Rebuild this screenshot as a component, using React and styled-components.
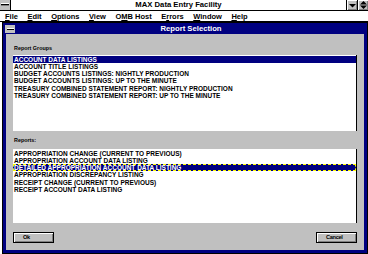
import React from "react";
import styled, { createGlobalStyle } from "styled-components";

const GlobalStyle = createGlobalStyle`
  html, body {
    margin: 0;
    padding: 0;
    background: #fff;
  }
  body {
    width: 368px;
    height: 254px;
    overflow: hidden;
    font-family: "Liberation Sans", Arial, sans-serif;
  }
`;

const menus = [
  ["F", "ile"],
  ["E", "dit"],
  ["O", "ptions"],
  ["V", "iew"],
  ["O", "MB Host", 1],
  ["E", "rrors", 1],
  ["W", "indow"],
  ["H", "elp"],
];

const groups = [
  "ACCOUNT DATA LISTINGS",
  "ACCOUNT TITLE LISTINGS",
  "BUDGET ACCOUNTS LISTINGS: NIGHTLY PRODUCTION",
  "BUDGET ACCOUNTS LISTINGS: UP TO THE MINUTE",
  "TREASURY COMBINED STATEMENT REPORT: NIGHTLY PRODUCTION",
  "TREASURY COMBINED STATEMENT REPORT: UP TO THE MINUTE",
];

const reports = [
  "APPROPRIATION CHANGE (CURRENT TO PREVIOUS)",
  "APPROPRIATION ACCOUNT DATA LISTING",
  "DETAILED APPROPRIATION ACCOUNT DATA LISTING",
  "APPROPRIATION DISCREPANCY LISTING",
  "RECEIPT CHANGE (CURRENT TO PREVIOUS)",
  "RECEIPT ACCOUNT DATA LISTING",
];

function MenuLabel({ item }) {
  const [first, rest, second] = item;
  if (second) {
    // underline sits on the second letter
    return (
      <MenuItem>
        {first}
        <u>{rest[0]}</u>
        {rest.slice(1)}
      </MenuItem>
    );
  }
  return (
    <MenuItem>
      <u>{first}</u>
      {rest}
    </MenuItem>
  );
}

export default function App() {
  return (
    <Screen>
      <GlobalStyle />
      <AppTitle>
        <AppSysBox />
        <AppTitleText>MAX Data Entry Facility</AppTitleText>
        <SizeButton>
          <svg width="7" height="5" viewBox="0 0 7 5">
            <path d="M0 1h7L3.5 4.5z" fill="#000" />
          </svg>
        </SizeButton>
        <SizeButton>
          <svg width="7" height="8" viewBox="0 0 7 8">
            <path d="M3.5 0L7 3.5H0z M0 4.5h7L3.5 8z" fill="#000" />
          </svg>
        </SizeButton>
      </AppTitle>

      <MenuBar>
        {menus.map((m, i) => (
          <MenuLabel key={i} item={m} />
        ))}
      </MenuBar>

      <Workspace>
        <Dialog>
          <Caption>
            <DialogSysBox />
            <CaptionText>Report Selection</CaptionText>
          </Caption>
          <Body>
            <Label $h={13}>Report Groups</Label>
            <ListBox $h={76}>
              {groups.map((g, i) => (
                <Row key={g} $selected={i === 0}>
                  {g}
                </Row>
              ))}
            </ListBox>
            <Label $h={18}>Reports:</Label>
            <ListBox $h={74}>
              {reports.map((r, i) => (
                <Row key={r} $selected={i === 2} $focused={i === 2}>
                  {r}
                </Row>
              ))}
            </ListBox>
            <ButtonRow>
              <PushButton>Ok</PushButton>
              <PushButton>Cancel</PushButton>
            </ButtonRow>
          </Body>
        </Dialog>
      </Workspace>
    </Screen>
  );
}

const Screen = styled.div`
  width: 368px;
  height: 254px;
  display: flex;
  flex-direction: column;
  background: #fff;
  overflow: hidden;
`;

const AppTitle = styled.div`
  height: 10px;
  display: flex;
  border-bottom: 1px solid #000;
  background: #fff;
`;

const AppSysBox = styled.div`
  width: 10px;
  height: 10px;
  background: #c0c0c0;
  border-right: 1px solid #000;
  position: relative;
  &::after {
    content: "";
    position: absolute;
    left: 1px;
    top: 4px;
    width: 8px;
    height: 1px;
    background: #000;
    box-shadow: 0 -1px 0 #fff, 0 1px 0 #808080;
  }
`;

const AppTitleText = styled.div`
  flex: 1;
  text-align: center;
  font-size: 7.7px;
  font-weight: 700;
  line-height: 10px;
  color: #000;
`;

const SizeButton = styled.div`
  width: 10px;
  height: 10px;
  border-left: 1px solid #000;
  background: #c0c0c0;
  box-shadow: inset 1px 1px #fff, inset -1px -1px #808080;
  display: flex;
  align-items: center;
  justify-content: center;
`;

const MenuBar = styled.div`
  height: 10px;
  display: flex;
  gap: 9.5px;
  padding-left: 5px;
  border-bottom: 1px solid #000;
  background: #fff;
`;

const MenuItem = styled.span`
  font-size: 7.5px;
  font-weight: 700;
  line-height: 11px;
  color: #000;
  white-space: nowrap;
  u {
    text-decoration: underline;
    text-underline-offset: 1px;
  }
`;

const Workspace = styled.div`
  flex: 1;
  display: flex;
  padding-left: 2px;
  background: #fff;
`;

const Dialog = styled.div`
  width: 366px;
  height: 232px;
  box-sizing: border-box;
  border: 1px solid #000;
  background: #000080;
  display: flex;
  flex-direction: column;
`;

const Caption = styled.div`
  height: 11px;
  display: flex;
  align-items: center;
  padding-left: 2px;
`;

const DialogSysBox = styled.div`
  width: 10px;
  height: 8px;
  background: #c0c0c0;
  position: relative;
  &::after {
    content: "";
    position: absolute;
    left: 2px;
    top: 3px;
    width: 7px;
    height: 1px;
    background: #fff;
    box-shadow: 0 1px 0 #000;
  }
`;

const CaptionText = styled.div`
  flex: 1;
  text-align: center;
  color: #fff;
  font-size: 7.7px;
  font-weight: 700;
  line-height: 11px;
`;

const Body = styled.div`
  flex: 1;
  margin: 0 3px 3px 3px;
  background: #c0c0c0;
  display: flex;
  flex-direction: column;
  padding: 8px 7px 7px 7px;
`;

const Label = styled.div`
  height: ${(p) => p.$h}px;
  line-height: ${(p) => p.$h}px;
  font-size: 5.4px;
  font-weight: 700;
  padding-left: 1px;
  color: #000;
`;

const ListBox = styled.div`
  height: ${(p) => p.$h}px;
  background: #fff;
  border-right: 1px solid #000;
  padding-top: 0.5px;
  box-sizing: border-box;
  display: flex;
  flex-direction: column;
  overflow: hidden;
`;

const Row = styled.div`
  height: 7.33px;
  line-height: 7.33px;
  font-size: 6.5px;
  font-weight: 700;
  padding-left: 1px;
  white-space: nowrap;
  color: ${(p) => (p.$selected ? "#fff" : "#000")};
  background: ${(p) => (p.$selected ? "#000080" : "transparent")};
  outline: ${(p) => (p.$focused ? "1px dashed #ffff00" : "none")};
  outline-offset: -1px;
`;

const ButtonRow = styled.div`
  margin-top: 9px;
  height: 11px;
  display: flex;
  justify-content: space-between;
`;

const PushButton = styled.div`
  width: 41px;
  height: 11px;
  box-sizing: border-box;
  border: 1px solid #000;
  background: #c0c0c0;
  box-shadow: inset 1px 1px #fff, inset -1px -1px #808080;
  padding-left: 9px;
  font-size: 5.6px;
  font-weight: 700;
  letter-spacing: -0.3px;
  line-height: 9px;
  color: #000;
`;
